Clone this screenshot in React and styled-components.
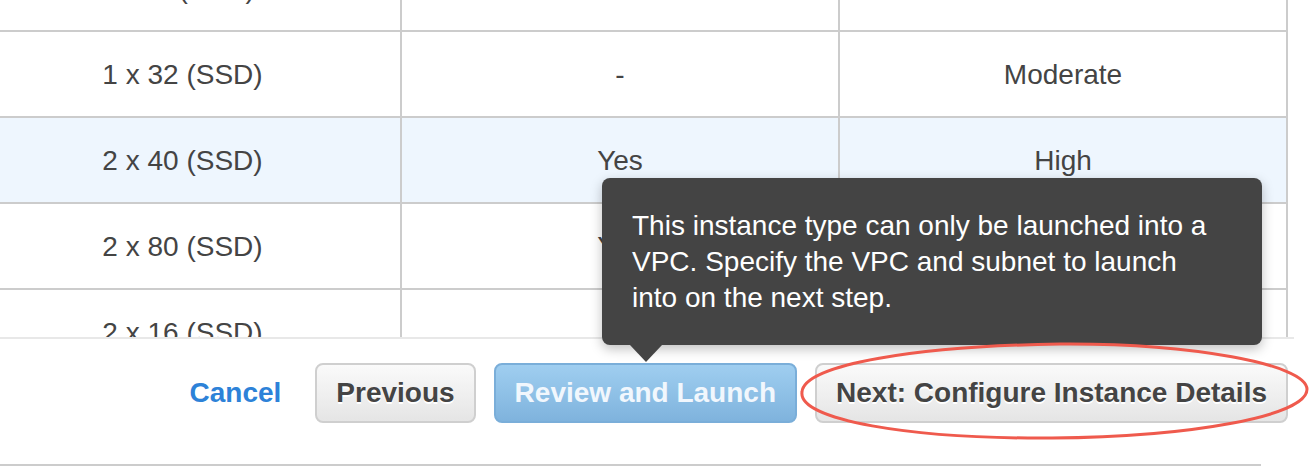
import React from "react";
import styled, { createGlobalStyle } from "styled-components";

const Global = createGlobalStyle`
  html, body { margin: 0; padding: 0; background: #fff; }
  body { font-family: "Liberation Sans", Arial, Helvetica, sans-serif; }
  * { box-sizing: border-box; }
`;

const Page = styled.div`
  position: relative;
  width: 1310px;
  height: 468px;
  overflow: hidden;
  background: #fff;
`;

const TableViewport = styled.div`
  height: 337px;
  width: 1288px;
  overflow: hidden;
`;

const Table = styled.div`
  display: flex;
  flex-direction: column;
  margin-top: -54px;
  margin-left: -35px;
  width: 1323px;
`;

const Row = styled.div`
  display: grid;
  grid-template-columns: 437px 438px 448px;
  height: 86px;
  border-bottom: 2px solid #cccccc;
  background: ${(p) => (p.$selected ? "#eef6fe" : "#ffffff")};
`;

const Cell = styled.div`
  display: flex;
  align-items: center;
  justify-content: center;
  border-right: 2px solid #cccccc;
  color: #444444;
  font-size: 28px;
  padding-top: 1px;
`;

const Footer = styled.div`
  width: 1294px;
  border-top: 2px solid #e8e8e8;
  padding-top: 24px;
  height: 127px;
`;

const Actions = styled.div`
  display: flex;
  justify-content: flex-end;
  align-items: center;
  gap: 18px;
  padding-right: 6px;
`;

const CancelLink = styled.a`
  color: #2d82d8;
  font-weight: bold;
  font-size: 28px;
  margin-right: 16px;
  text-decoration: none;
  cursor: pointer;
`;

const Button = styled.button`
  height: 60px;
  padding: 0 19px;
  border-radius: 8px;
  font-family: inherit;
  font-weight: bold;
  font-size: 28px;
  cursor: pointer;
  border: 2px solid ${(p) => (p.$primary ? "#7aaed9" : "#cfcfcf")};
  color: ${(p) => (p.$primary ? "#f1f7fd" : "#444444")};
  text-shadow: ${(p) => (p.$primary ? "none" : "0 2px 0 #ffffff")};
  background: ${(p) =>
    p.$primary
      ? "linear-gradient(to bottom, #9fcef0, #7fb3dd)"
      : "linear-gradient(to bottom, #fafafa, #e5e5e5)"};
`;

const BottomRule = styled.div`
  width: 1261px;
  height: 2px;
  background: #cccccc;
`;

const Tooltip = styled.div`
  position: absolute;
  left: 602px;
  top: 178px;
  width: 660px;
  height: 167px;
  padding: 30px 30px;
  background: #444444;
  border-radius: 8px;
  color: #ffffff;
  font-size: 28px;
  line-height: 36px;
  box-shadow: 0 4px 12px rgba(0, 0, 0, 0.25);

  &::after {
    content: "";
    position: absolute;
    left: 28px;
    bottom: -17px;
    border-left: 16px solid transparent;
    border-right: 16px solid transparent;
    border-top: 17px solid #444444;
  }
`;

const TooltipText = styled.p`
  margin: 0;
  max-width: 590px;
`;

const Annotation = styled.svg`
  position: absolute;
  left: 790px;
  top: 336px;
  pointer-events: none;
`;

const rows = [
  ["1 x 4 (SSD)", "-", "Moderate"],
  ["1 x 32 (SSD)", "-", "Moderate"],
  ["2 x 40 (SSD)", "Yes", "High", true],
  ["2 x 80 (SSD)", "Yes", "High"],
  ["2 x 16 (SSD)", "-", "Moderate"],
];

export default function App() {
  return (
    <>
      <Global />
      <Page>
        <TableViewport>
          <Table>
            {rows.map(([a, b, c, sel], i) => (
              <Row key={i} $selected={sel}>
                <Cell>{a}</Cell>
                <Cell>{b}</Cell>
                <Cell>{c}</Cell>
              </Row>
            ))}
          </Table>
        </TableViewport>
        <Footer>
          <Actions>
            <CancelLink>Cancel</CancelLink>
            <Button>Previous</Button>
            <Button $primary>Review and Launch</Button>
            <Button>Next: Configure Instance Details</Button>
          </Actions>
        </Footer>
        <BottomRule />
        <Tooltip>
          <TooltipText>
            This instance type can only be launched into a VPC. Specify the VPC
            and subnet to launch into on the next step.
          </TooltipText>
        </Tooltip>
        <Annotation width="520" height="110" viewBox="0 0 520 110">
          <path
            d="M 12 56 C 14 28, 130 10, 270 8 C 400 7, 516 28, 517 53 C 518 80, 400 101, 262 102 C 120 103, 8 84, 12 56 Z"
            fill="none"
            stroke="#ef5a4d"
            strokeWidth="3"
          />
        </Annotation>
      </Page>
    </>
  );
}
